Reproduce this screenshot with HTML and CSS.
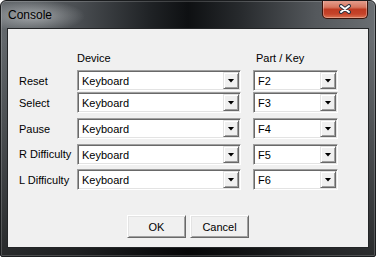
FILE: index.html
```html
<!DOCTYPE html>
<html>
  <head>
    <title>Console</title>
    <meta charset="utf-8">
    <link rel="stylesheet" href="styles.css">
  </head>
  <body>
    <div class="window">
      <!-- (A) TITLE BAR -->
      <div class="titlebar">
        <span class="title">Console</span>
        <button class="close">
          <svg width="14" height="10" viewBox="0 0 14 10">
            <path d="M3 2 L11 8 M11 2 L3 8" stroke="#2a3340" stroke-width="4" stroke-linecap="round"/>
            <path d="M3 2 L11 8 M11 2 L3 8" stroke="#fff" stroke-width="2" stroke-linecap="round"/>
          </svg>
        </button>
      </div>

      <!-- (B) CLIENT AREA -->
      <div class="client">
        <div class="grid">
          <span></span>
          <span class="head">Device</span>
          <span class="head key">Part / Key</span>

          <label>Reset</label>
          <div class="combo"><span>Keyboard</span><i class="drop"></i></div>
          <div class="combo"><span>F2</span><i class="drop"></i></div>

          <label>Select</label>
          <div class="combo"><span>Keyboard</span><i class="drop"></i></div>
          <div class="combo"><span>F3</span><i class="drop"></i></div>

          <label>Pause</label>
          <div class="combo"><span>Keyboard</span><i class="drop"></i></div>
          <div class="combo"><span>F4</span><i class="drop"></i></div>

          <label class="up">R Difficulty</label>
          <div class="combo"><span>Keyboard</span><i class="drop"></i></div>
          <div class="combo"><span>F5</span><i class="drop"></i></div>

          <label>L Difficulty</label>
          <div class="combo"><span>Keyboard</span><i class="drop"></i></div>
          <div class="combo"><span>F6</span><i class="drop"></i></div>
        </div>

        <div class="buttons">
          <button class="btn">OK</button>
          <button class="btn">Cancel</button>
        </div>
      </div>
    </div>
  </body>
</html>
```

FILE: styles.css
```css
/* (X) PAGE */
body {
  margin: 0;
  background: #fff;
  font-family: "Liberation Sans", Arial, sans-serif;
  font-size: 11px;
  color: #000;
}

/* (A) WINDOW FRAME */
.window {
  width: 376px;
  height: 257px;
  box-sizing: border-box;
  border: 1px solid #1a1c1e;
  border-radius: 6px 6px 2px 2px;
  overflow: hidden;
  background:
    radial-gradient(52px 16px at 32px 15px, rgba(225,228,230,.55), rgba(225,228,230,0)),
    linear-gradient(180deg, rgba(0,0,0,0) 0, rgba(0,0,0,0) 40px, rgba(0,0,0,.6) 100%),
    linear-gradient(90deg, #63686c 0%, #4b4f53 20%, #1f2225 40%, #0e1012 50%, #272a2d 64%, #54585c 84%, #6a6e72 100%);
  box-shadow: inset 0 0 0 1px rgba(255,255,255,.18);
}
.titlebar {
  height: 27px;
  display: flex;
  justify-content: space-between;
  align-items: flex-start;
  padding-left: 7px;
}
.title {
  font-size: 12px;
  line-height: 14px;
  padding-top: 7px;
}
.close {
  width: 46px;
  height: 19px;
  margin: -1px 7px 0 0;
  padding: 0;
  display: flex;
  align-items: center;
  justify-content: center;
  border: 1px solid #3b130a;
  border-top: 0;
  border-radius: 0 0 5px 5px;
  background: linear-gradient(180deg, #e6a394 0%, #d6765f 40%, #bf3b22 52%, #c6432a 78%, #dc7352 100%);
  box-shadow: inset 0 0 0 1px rgba(255,255,255,.3);
}

/* (B) CLIENT */
.client {
  height: 220px;
  margin: 0 6px;
  box-sizing: border-box;
  border: 1px solid #232527;
  background: #f0f0f0;
  padding: 23px 0 0 11px;
}
.grid {
  display: grid;
  grid-template-columns: 46px 164px 85px;
  grid-template-rows: 18px 22px 26px 26px 25px 21px;
  column-gap: 12px;
}
.head { line-height: 13px; }
.head.key { padding-left: 3px; }
.grid label {
  line-height: 13px;
  padding-top: 5px;
  white-space: nowrap;
}
.grid label.up { padding-top: 4px; }

/* (C) COMBO BOX */
.combo {
  height: 21px;
  box-sizing: border-box;
  display: flex;
  padding: 1px;
  border: 1px solid;
  border-color: #a0a0a0 #fff #fff #a0a0a0;
  box-shadow: inset 1px 1px #696969, inset -1px -1px #e3e3e3;
  background: #fff;
}
.combo span {
  flex: 1;
  line-height: 13px;
  padding: 2px 0 0 2px;
  background: #fff;
  margin: 1px 0 0 1px;
}
.drop {
  width: 16px;
  height: 17px;
  box-sizing: border-box;
  display: flex;
  align-items: center;
  justify-content: center;
  border: 1px solid;
  border-color: #e3e3e3 #696969 #696969 #e3e3e3;
  box-shadow: inset 1px 1px #fff, inset -1px -1px #a0a0a0;
  background: #f0f0f0;
}
.drop::after {
  content: "";
  width: 7px;
  height: 4px;
  background: #000;
  clip-path: polygon(0 0, 100% 0, 50% 100%);
}

/* (D) BUTTONS */
.buttons {
  display: flex;
  justify-content: center;
  gap: 4px;
  margin: 25px 11px 0 0;
}
.btn {
  width: 59px;
  height: 23px;
  padding: 0;
  font-family: "Liberation Sans", Arial, sans-serif;
  font-size: 11px;
  color: #000;
  background: #f0f0f0;
  border: 1px solid;
  border-color: #fff #696969 #696969 #fff;
  box-shadow: inset 1px 1px #e3e3e3, inset -1px -1px #a0a0a0;
}
```
